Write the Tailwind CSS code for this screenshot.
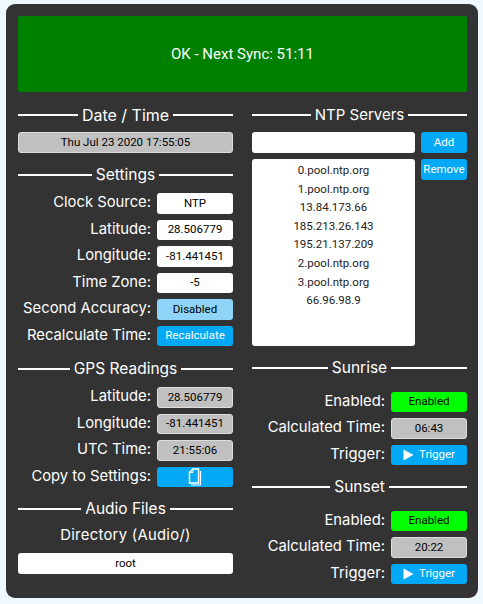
<!DOCTYPE html>
<html lang="en">
<head>
    <meta charset="UTF-8">
    <meta name="viewport" content="width=device-width, initial-scale=1.0">
    <title>Clock Settings</title>
    <script src="https://cdn.jsdelivr.net/npm/@tailwindcss/browser@4"></script>
</head>
<body class="bg-[#f0f8ff] font-['Inter',sans-serif] overflow-hidden">
    <div class="w-[472px] h-[594px] ml-[6px] mt-[4px] bg-[#333333] rounded-[9px] px-[12px] pt-[12px] text-white">
        <!-- Status -->
        <div class="w-[449px] h-[76px] bg-[#008000] rounded-[2px] flex items-center justify-center font-['Roboto',sans-serif] text-[15px]">OK - Next Sync: 51:11</div>

        <div class="flex justify-between mt-[13px] w-[449px]">
            <!-- Left column -->
            <div class="w-[215px]">
                <div class="flex items-center gap-[4px] h-[20px] text-[16px]"><span class="flex-1 h-[2px] bg-white"></span>Date / Time<span class="flex-1 h-[2px] bg-white"></span></div>
                <div class="mt-[7px] h-[21px] bg-[#c0c0c0] rounded-[3px] border border-[#ddd] flex items-center justify-center font-['Roboto',sans-serif] text-[11.5px] text-black">Thu Jul 23 2020 17:55:05</div>

                <div class="flex items-center gap-[4px] h-[20px] mt-[12px] text-[15.5px]"><span class="flex-1 h-[2px] bg-white"></span>Settings<span class="flex-1 h-[2px] bg-white"></span></div>
                <div class="mt-[8px] flex flex-col gap-[6px]">
                    <div class="flex items-center justify-end gap-[6px] h-[20.5px] text-[14.8px]"><span class="-mt-[2px]">Clock Source:</span><div class="w-[76px] h-full bg-white rounded-[3px] flex items-center justify-center font-['Roboto',sans-serif] text-[11.5px] text-black">NTP</div></div>
                    <div class="flex items-center justify-end gap-[6px] h-[20.5px] text-[14.8px]"><span class="-mt-[2px]">Latitude:</span><div class="w-[76px] h-full bg-white rounded-[3px] flex items-center justify-center font-['Roboto',sans-serif] text-[11.5px] text-black">28.506779</div></div>
                    <div class="flex items-center justify-end gap-[6px] h-[20.5px] text-[14.8px]"><span class="-mt-[2px]">Longitude:</span><div class="w-[76px] h-full bg-white rounded-[3px] flex items-center justify-center font-['Roboto',sans-serif] text-[11.5px] text-black">-81.441451</div></div>
                    <div class="flex items-center justify-end gap-[6px] h-[20.5px] text-[14.8px]"><span class="-mt-[2px]">Time Zone:</span><div class="w-[76px] h-full bg-white rounded-[3px] flex items-center justify-center font-['Roboto',sans-serif] text-[11.5px] text-black">-5</div></div>
                    <div class="flex items-center justify-end gap-[6px] h-[20.5px] text-[14.8px]"><span class="-mt-[2px]">Second Accuracy:</span><div class="w-[76px] h-full bg-[#8fd3f7] rounded-[3px] flex items-center justify-center font-['Roboto',sans-serif] text-[11.5px] text-black">Disabled</div></div>
                    <div class="flex items-center justify-end gap-[6px] h-[20.5px] text-[14.8px]"><span class="-mt-[2px]">Recalculate Time:</span><div class="w-[76px] h-full bg-[#03a9f4] rounded-[3px] flex items-center justify-center font-['Roboto',sans-serif] text-[11.5px] text-white">Recalculate</div></div>
                </div>

                <div class="flex items-center gap-[4px] h-[20px] mt-[13px] text-[15.5px]"><span class="flex-1 h-[2px] bg-white"></span>GPS Readings<span class="flex-1 h-[2px] bg-white"></span></div>
                <div class="mt-[8px] flex flex-col gap-[6px]">
                    <div class="flex items-center justify-end gap-[6px] h-[20.5px] text-[14.8px]"><span class="-mt-[2px]">Latitude:</span><div class="w-[76px] h-full bg-[#c0c0c0] border border-[#ddd] rounded-[3px] flex items-center justify-center font-['Roboto',sans-serif] text-[11.5px] text-black">28.506779</div></div>
                    <div class="flex items-center justify-end gap-[6px] h-[20.5px] text-[14.8px]"><span class="-mt-[2px]">Longitude:</span><div class="w-[76px] h-full bg-[#c0c0c0] border border-[#ddd] rounded-[3px] flex items-center justify-center font-['Roboto',sans-serif] text-[11.5px] text-black">-81.441451</div></div>
                    <div class="flex items-center justify-end gap-[6px] h-[20.5px] text-[14.8px]"><span class="-mt-[2px]">UTC Time:</span><div class="w-[76px] h-full bg-[#c0c0c0] border border-[#ddd] rounded-[3px] flex items-center justify-center font-['Roboto',sans-serif] text-[11.5px] text-black">21:55:06</div></div>
                    <div class="flex items-center justify-end gap-[6px] h-[20.5px] text-[14.8px]"><span class="-mt-[2px]">Copy to Settings:</span><div class="w-[76px] h-full bg-[#03a9f4] rounded-[3px] flex items-center justify-center">
                        <svg width="14" height="18" viewBox="0 0 14 18" fill="none" stroke="white" stroke-width="1.5"><path d="M1.5 4.5 L5 1 H10.5 V15 H1.5 Z" fill="#03a9f4"/><path d="M5 1 V4.5 H1.5" stroke-width="1"/><path d="M12.5 3 V17 H3" stroke-width="1.2"/></svg>
                    </div></div>
                </div>

                <div class="flex items-center gap-[4px] h-[20px] mt-[12px] text-[15.5px]"><span class="flex-1 h-[2px] bg-white"></span>Audio Files<span class="flex-1 h-[2px] bg-white"></span></div>
                <div class="mt-[6px] h-[20px] flex items-center justify-center text-[14.8px] tracking-[0.3px]">Directory (Audio/)</div>
                <div class="mt-[8px] h-[21px] bg-white rounded-[3px] flex items-center justify-center font-['Roboto',sans-serif] text-[11.5px] text-black">root</div>
            </div>

            <!-- Right column -->
            <div class="w-[215px]">
                <div class="flex items-center gap-[4px] h-[20px] text-[15px]"><span class="flex-1 h-[2px] bg-white"></span>NTP Servers<span class="flex-1 h-[2px] bg-white"></span></div>
                <div class="mt-[7px] flex gap-[6px]">
                    <div class="w-[163px] flex flex-col gap-[6px]">
                        <div class="h-[21px] bg-white rounded-[3px]"></div>
                        <ul class="h-[187px] bg-white rounded-[3px] pt-[2px] font-['Roboto',sans-serif] text-[11.5px] leading-[18.6px] text-[#222] text-center">
                            <li>0.pool.ntp.org</li>
                            <li>1.pool.ntp.org</li>
                            <li>13.84.173.66</li>
                            <li>185.213.26.143</li>
                            <li>195.21.137.209</li>
                            <li>2.pool.ntp.org</li>
                            <li>3.pool.ntp.org</li>
                            <li>66.96.98.9</li>
                        </ul>
                    </div>
                    <div class="w-[46px] flex flex-col gap-[6px] font-['Roboto',sans-serif] text-[11.5px]">
                        <button class="h-[21px] bg-[#03a9f4] rounded-[3px]">Add</button>
                        <button class="h-[21px] bg-[#03a9f4] rounded-[3px]">Remove</button>
                    </div>
                </div>

                <div class="flex items-center gap-[4px] h-[20px] mt-[12px] text-[15.5px]"><span class="flex-1 h-[2px] bg-white"></span>Sunrise<span class="flex-1 h-[2px] bg-white"></span></div>
                <div class="mt-[13.5px] flex flex-col gap-[6px]">
                    <div class="flex items-center justify-end gap-[6px] h-[20.5px] text-[14.8px]"><span class="-mt-[2px]">Enabled:</span><div class="w-[76px] h-full bg-[#00ff00] rounded-[3px] flex items-center justify-center font-['Roboto',sans-serif] text-[11.5px] text-black">Enabled</div></div>
                    <div class="flex items-center justify-end gap-[6px] h-[20.5px] text-[14.8px]"><span class="-mt-[2px]">Calculated Time:</span><div class="w-[76px] h-full bg-[#c0c0c0] border border-[#ddd] rounded-[3px] flex items-center justify-center font-['Roboto',sans-serif] text-[11.5px] text-black">06:43</div></div>
                    <div class="flex items-center justify-end gap-[6px] h-[20.5px] text-[14.8px]"><span class="-mt-[2px]">Trigger:</span><div class="w-[76px] h-full bg-[#03a9f4] rounded-[3px] flex items-center justify-center gap-[5px] font-['Roboto',sans-serif] text-[11.5px] text-white"><svg width="11" height="12" viewBox="0 0 11 12" fill="white"><path d="M0.5 0.5 L10.5 6 L0.5 11.5 Z"/></svg>Trigger</div></div>
                </div>

                <div class="flex items-center gap-[4px] h-[20px] mt-[11.5px] text-[15.5px]"><span class="flex-1 h-[2px] bg-white"></span>Sunset<span class="flex-1 h-[2px] bg-white"></span></div>
                <div class="mt-[14px] flex flex-col gap-[6px]">
                    <div class="flex items-center justify-end gap-[6px] h-[20.5px] text-[14.8px]"><span class="-mt-[2px]">Enabled:</span><div class="w-[76px] h-full bg-[#00ff00] rounded-[3px] flex items-center justify-center font-['Roboto',sans-serif] text-[11.5px] text-black">Enabled</div></div>
                    <div class="flex items-center justify-end gap-[6px] h-[20.5px] text-[14.8px]"><span class="-mt-[2px]">Calculated Time:</span><div class="w-[76px] h-full bg-[#c0c0c0] border border-[#ddd] rounded-[3px] flex items-center justify-center font-['Roboto',sans-serif] text-[11.5px] text-black">20:22</div></div>
                    <div class="flex items-center justify-end gap-[6px] h-[20.5px] text-[14.8px]"><span class="-mt-[2px]">Trigger:</span><div class="w-[76px] h-full bg-[#03a9f4] rounded-[3px] flex items-center justify-center gap-[5px] font-['Roboto',sans-serif] text-[11.5px] text-white"><svg width="11" height="12" viewBox="0 0 11 12" fill="white"><path d="M0.5 0.5 L10.5 6 L0.5 11.5 Z"/></svg>Trigger</div></div>
                </div>
            </div>
        </div>
    </div>
</body>
</html>
